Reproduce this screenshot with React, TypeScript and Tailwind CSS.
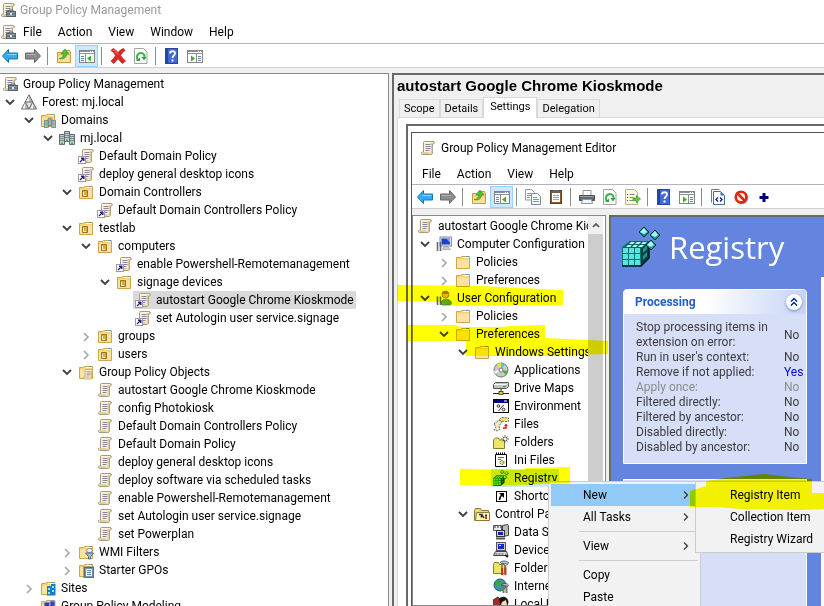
import type { ReactNode } from "react";

/* ---------- icons, all on a 16x16 grid ---------- */

const Svg = ({ children }: { children: ReactNode }) => (
  <svg className="w-4 h-4 shrink-0" viewBox="0 0 16 16" fill="none" aria-hidden="true">
    {children}
  </svg>
);

const ScrollShape = () => (
  <>
    <path d="M4.500 1.500h8.500c2 0 2 2.500 0 2.500h-.5v8c0 1.800-.5 2.500-1.500 2.500H2.500C1 14.500 1 12 2.500 12h1V2.500c0-.6.4-1 1-1z" fill="#fbf3d2" stroke="#a39b82" />
    <path d="M11.500 3v9c0 1.200-.5 1.700-1 1.700" stroke="#dccb93" strokeWidth="1.500" />
    <path d="M13.500 2v2" stroke="#c9b77c" />
    <path d="M5.500 4.500h5M5.500 6.500h5M5.500 8.500h5M5.500 10.500h4" stroke="#8484a0" />
    <path d="M2.500 13h7" stroke="#d6c48a" strokeWidth="1.500" />
  </>
);

const ScrollIcon = () => (
  <Svg>
    <ScrollShape />
  </Svg>
);

const ScrollLinkIcon = () => (
  <Svg>
    <g transform="translate(1 0)">
      <ScrollShape />
    </g>
    <rect x="0.500" y="8.500" width="7" height="7" fill="#fff" stroke="#9a9aac" />
    <path d="M3 10h3v3z" fill="#23237e" stroke="#23237e" />
    <path d="M4.500 11.500L2 14" stroke="#23237e" strokeWidth="1.200" />
  </Svg>
);

const ConsoleIcon = () => (
  <Svg>
    <ScrollShape />
    <path d="M9 9.500V8h4v1.500" stroke="#5c6670" />
    <rect x="6.500" y="9.500" width="9" height="5" fill="#8c9dab" stroke="#56636f" />
    <path d="M7 12h8" stroke="#47525c" />
    <rect x="10" y="11" width="2" height="2" fill="#dfe6ea" />
  </Svg>
);

const ForestIcon = () => (
  <Svg>
    <path d="M8 .8L15.500 15H.5z" fill="#b9b9b9" stroke="#6a6a6a" />
    <path d="M8 2v6H4.800zM4 9v5.500H1.500zM12 9v5.500H9z" fill="#f4f4f4" />
    <path d="M4.300 8h7.400L8 15z" fill="#e4e4e4" stroke="#6a6a6a" />
  </Svg>
);

const FolderBase = () => (
  <>
    <path d="M1.500 3.500h4l1-1h8v12h-13z" fill="#f3d27c" stroke="#cfa54a" />
    <path d="M2 5.500h12V14H2z" fill="#fae3a0" />
    <path d="M8 3.500h6" stroke="#fff" />
    <path d="M11 2.500h3" stroke="#4f9be6" />
  </>
);

const FolderIcon = () => (
  <Svg>
    <FolderBase />
  </Svg>
);

const OuIcon = () => (
  <Svg>
    <FolderBase />
    <path d="M4.500 6.500h5v6h-5z" fill="#d5ac45" stroke="#987423" />
    <path d="M5.500 8v3.500h2.500" stroke="#fff3c4" />
  </Svg>
);

const ServerShape = () => (
  <>
    {[[5, 1], [0, 4], [10, 4]].map(([x, y]) => (
      <g key={x} transform={`translate(${x} ${y})`}>
        <path d="M.5.500h5v10h-5z" fill="#c3ccd3" stroke="#626c74" />
        <path d="M1 2.500h4M1 4.500h4M1 6.500h4" stroke="#7c8790" />
        <path d="M2 9.500h2" stroke="#35c413" strokeWidth="2" />
      </g>
    ))}
  </>
);

const DomainIcon = () => (
  <Svg>
    <ServerShape />
  </Svg>
);

const DomainsIcon = () => (
  <Svg>
    <FolderBase />
    <g transform="translate(4 5) scale(.75)">
      <ServerShape />
    </g>
  </Svg>
);

const GpoFolderIcon = () => (
  <Svg>
    <FolderBase />
    <g transform="translate(4.500 4.500) scale(.72)">
      <ScrollShape />
    </g>
  </Svg>
);

const WmiIcon = () => (
  <Svg>
    <FolderBase />
    <ellipse cx="11.500" cy="6.500" rx="3" ry="2" fill="#f4f4f4" stroke="#888" />
    <path d="M7.500 9h8l-3 3.500V15h-2v-2.500z" fill="#a7c0d4" stroke="#4d6c85" />
  </Svg>
);

const StarterIcon = () => (
  <Svg>
    <FolderBase />
    <rect x="6" y="5" width="9.500" height="10.500" fill="#7a5540" stroke="#5c7080" />
    <rect x="7.500" y="6.500" width="7" height="8" fill="#edf5fb" stroke="#7895ad" />
    <path d="M9 8.500h4M9 10.500h4M9 12.500h4" stroke="#5b86a8" />
  </Svg>
);

const SitesIcon = () => (
  <Svg>
    <FolderBase />
    <path d="M7 6h4V4h4.500v11.500H7z" fill="#1380c4" />
    <path d="M8 8h2v2H8zM12 6h2v2h-2zM12 10h2v2h-2zM8 12h2v2H8z" fill="#9fe0ff" />
  </Svg>
);

const ModelingIcon = () => (
  <Svg>
    <FolderBase />
    <rect x="4" y="4" width="6" height="5" fill="#2a3fb0" stroke="#ccc" />
    <rect x="10" y="3" width="5" height="6" fill="#3048c0" stroke="#aaa" />
  </Svg>
);

const ArrowIcon = ({ forward = false }: { forward?: boolean }) => (
  <Svg>
    <path
      d={forward ? "M15.500 8L9.500 1.500v3.500H.5v6h9v3.500z" : "M.5 8L6.500 1.500v3.500h9v6h-9v3.500z"}
      fill={forward ? "#8c8c8c" : "#35aaf0"}
      stroke={forward ? "#696969" : "#1475bb"}
    />
    <path d={forward ? "M1.500 6.500h9" : "M5.500 6.500h9"} stroke={forward ? "#b4b4b4" : "#8fd6fb"} />
  </Svg>
);

const FolderUpIcon = () => (
  <Svg>
    <path d="M1.500 4.500h5l1-2h6l1 2v10h-13z" fill="#f3cf76" stroke="#c69c40" />
    <path d="M2 8h12v6H2z" fill="#fadf95" />
    <path d="M3 10.500c3 0 4.500-2 4.500-4.500H5L9 1l4 5h-2.500c0 3.500-3 6-7.500 4.500z" fill="#4dc22f" stroke="#2b8a1d" strokeWidth=".6" />
  </Svg>
);

const PaneIcon = ({ play = false }: { play?: boolean }) => (
  <Svg>
    <rect x=".5" y="2.500" width="15" height="12" fill="#fff" stroke="#858585" />
    <path d="M1 3.500h14M1 5.500h14" stroke="#8d9196" />
    <path d="M11 3.500h1M13 3.500h1" stroke="#fff" />
    <path d={play ? "M9.500 6v9" : "M6.500 6v9"} stroke="#8b8b8b" />
    <path d={play ? "M11 8.500h3M11 10.500h3M11 12.500h3" : "M2 8.500h3M2 10.500h3M2 12.500h3"} stroke="#5a86b8" />
    <path d={play ? "M4 7.500v6l4-3z" : "M12 7.500v6l-4-3z"} fill="#35b224" />
  </Svg>
);

const DeleteIcon = () => (
  <Svg>
    <path d="M1 2.500L3 .5c2 .5 3.500 2.500 5 4 1.500-1.700 3.300-3.300 5.500-4L15 2.500c-1.800 1.300-3.500 3-4.500 5 1.300 2 3 3.700 5 5.500l-3 2.500c-1.700-1.200-3-3-4.500-5-1.300 2-3 4-4.500 5L1 13c1.800-1.500 3.500-3.500 4.500-5.500C4.500 5.500 2.800 3.700 1 2.500z" fill="#dd2626" stroke="#b11b1b" strokeWidth=".7" />
    <path d="M3 2c2 1 3.500 3 5 4.500" stroke="#f38a86" />
  </Svg>
);

const PageOutline = () => (
  <path d="M1.500.500h9l3.500 3.500v11.500H1.500z" fill="#fdfdfd" stroke="#a3a3a3" />
);

const RefreshIcon = () => (
  <Svg>
    <PageOutline />
    <path d="M5.500 12.500C3 10.500 3.500 5.500 7.500 5c3-.2 4.500 2 4 5" stroke="#39b54a" strokeWidth="2" />
    <path d="M8.500 9H13.500l-2.500 3.500zM7 9.500v3.500H3z" fill="#2ba63b" />
  </Svg>
);

const HelpIcon = () => (
  <Svg>
    <rect x="1.500" y=".5" width="12" height="15" fill="#4169cf" stroke="#2748a0" />
    <path d="M3 1v14" stroke="#2346a5" strokeWidth="2" />
    <path d="M6 5.500C6 2.500 11 2.500 11 5.500c0 2-2.500 2-2.500 4.500" stroke="#fff" strokeWidth="1.800" />
    <rect x="7.500" y="11.500" width="2" height="2" fill="#fff" />
  </Svg>
);

const CopyIcon = () => (
  <Svg>
    <path d="M.5.500h6l3 3v7.500h-9z" fill="#fff" stroke="#8f9aa8" />
    <path d="M2 4.500h4M2 6.500h4M2 8.500h3" stroke="#5c9bd6" />
    <path d="M6.500 4.500h6l3 3v8h-9z" fill="#fff" stroke="#7d8794" />
    <path d="M8 8.500h4M8 10.500h6M8 12.500h6" stroke="#5c9bd6" />
  </Svg>
);

const PasteIcon = () => (
  <Svg>
    <rect x="2.500" y="1.500" width="11" height="13" fill="#8c5a30" stroke="#663f1d" />
    <rect x="4" y="4" width="8" height="9" fill="#fafafa" />
    <path d="M5 6.500h6M5 8.500h6M5 10.500h6" stroke="#9aa7b2" />
    <path d="M5 1h6v3H5z" fill="#626262" />
  </Svg>
);

const PrinterIcon = () => (
  <Svg>
    <path d="M4 1.500h8v5H4z" fill="#fff" stroke="#969696" />
    <path d="M.5 6.500h15v5H.5z" fill="#65696f" stroke="#484b50" />
    <path d="M1 7.500h14" stroke="#9fa3a8" />
    <path d="M3.500 10.500h9l1 4h-11z" fill="#eef5fb" stroke="#8c98a3" />
  </Svg>
);

const ExportIcon = () => (
  <Svg>
    <path d="M.5.500h9l3 3v12H.5z" fill="#fcf8d8" stroke="#b5b09a" />
    <path d="M2 5.500h1M2 8.500h1M2 11.500h1" stroke="#444" />
    <path d="M4.500 5.500h5M4.500 8.500h4M4.500 11.500h4" stroke="#8585a0" />
    <path d="M8 9h3.500V6.500L15.500 10l-4 3.500V11.500H8z" fill="#60c83d" stroke="#3a9c25" strokeWidth=".7" />
  </Svg>
);

const XmlIcon = () => (
  <Svg>
    <path d="M1.500 13.500V.5h8" stroke="#4b89a3" />
    <path d="M3.500 2.500h7l4 4v9h-11z" fill="#fff" stroke="#3e6f96" />
    <path d="M10.500 2.500v4h4z" fill="#2f80c2" />
    <path d="M8 8.500L6 10.500l2 2M10 8.500l2 2-2 2" stroke="#171783" strokeWidth="1.300" />
  </Svg>
);

const StopIcon = () => (
  <Svg>
    <circle cx="8.700" cy="8.700" r="6.500" fill="#8a8a8a" />
    <circle cx="8" cy="8" r="5.300" fill="#fff" stroke="#e1280f" strokeWidth="2.600" />
    <path d="M4.500 4.500l7 7" stroke="#e1280f" strokeWidth="2.600" />
  </Svg>
);

const PlusIcon = () => (
  <Svg>
    <path d="M8 4v9M3.500 8.500h9" stroke="#000080" strokeWidth="3" />
  </Svg>
);

const ComputerIcon = () => (
  <Svg>
    <rect x="4" y="1" width="11.500" height="9" fill="#dfe3e7" stroke="#8b939b" />
    <rect x="5.500" y="2.500" width="8.500" height="6" fill="#1d3fd0" />
    <path d="M10 2.500h4v4z" fill="#86a5fa" />
    <path d="M8 10.500h4l2.500 3h-8z" fill="#c2c7cc" stroke="#8b939b" strokeWidth=".6" />
    <path d="M1.500 6v9M4.500 6v9" stroke="#5d6973" strokeWidth="1.600" />
  </Svg>
);

const UserIcon = () => (
  <Svg>
    <path d="M5 13c0-5 10-5 10.500 0l-1 2H6z" fill="#62a838" stroke="#39751d" strokeWidth=".7" />
    <circle cx="9.500" cy="4.500" r="3.500" fill="#e8bd71" stroke="#8b662c" strokeWidth=".8" />
    <path d="M6 4c0-4 6-4 7 0z" fill="#a87833" />
    <path d="M1.500 6.500v8.500M4.500 6.500v8.500" stroke="#5d6973" strokeWidth="1.600" />
  </Svg>
);

const DiscIcon = () => (
  <Svg>
    <circle cx="8" cy="8" r="7" fill="#c9c9c9" stroke="#777" />
    <path d="M8 8L4 2l4-1z" fill="#ece83a" />
    <path d="M8 8V1l4 1z" fill="#3fcfe4" />
    <path d="M8 8l7 1-2 4z" fill="#45ba3a" />
    <path d="M8 8l-6 4-1-3z" fill="#f5f5f5" />
    <circle cx="8" cy="8" r="2" fill="#fff" stroke="#777" />
  </Svg>
);

const DriveIcon = () => (
  <Svg>
    <path d="M2.500 2.500h13v4l-2 2H.5v-4z" fill="#c4c4c4" stroke="#555" />
    <path d="M1 4.500h12.500l1.500-1.500" stroke="#fff" />
    <path d="M10 6.500h3" stroke="#2ba32b" />
    <path d="M8 8.500v4M0 13.500h16" stroke="#222" />
    <rect x="6" y="11.500" width="4" height="3" fill="#dccf3a" stroke="#222" strokeWidth=".7" />
  </Svg>
);

const EnvironmentIcon = () => (
  <Svg>
    <rect x=".5" y="1.500" width="15" height="13" fill="#fff" stroke="#000" />
    <path d="M1 3.500h14" stroke="#00007d" strokeWidth="3" />
    <path d="M11 3h3" stroke="#fff" />
    <circle cx="5.500" cy="8" r="1.300" stroke="#000" strokeWidth=".8" />
    <circle cx="10.500" cy="11.500" r="1.300" stroke="#000" strokeWidth=".8" />
    <path d="M10.500 7l-5 6" stroke="#000" strokeWidth=".8" />
  </Svg>
);

const FilesIcon = () => (
  <Svg>
    <path d="M6.500 3.500l2-2 7 .5v3.500h-5l-4-1z" fill="#f0e374" stroke="#444" strokeWidth=".8" strokeDasharray="2 1" />
    <path d="M1 8l5-4 3 2-3 4 1 3-3 2-3-1 2-3z" fill="#ede9c0" stroke="#444" strokeWidth=".8" strokeDasharray="2 1" />
    <path d="M10 12h3V9.500" stroke="#d11" strokeWidth="1.400" />
    <path d="M11 10L13 7.500l2 2.500z" fill="#d11" />
  </Svg>
);

const NewFolderIcon = () => (
  <Svg>
    <path d="M.5 6l2-2h3l1 2h5v8.500H.5z" fill="#ede46b" stroke="#85802a" />
    <path d="M12 1v8M8 5h8M9.500 2.500l5 5M14.500 2.500l-5 5" stroke="#444" strokeWidth=".8" />
    <rect x="11" y="4" width="2" height="2" fill="#fff" />
  </Svg>
);

const IniIcon = () => (
  <Svg>
    <path d="M2.500 2.500h11v12h-11z" fill="#fff" stroke="#000" />
    <path d="M3 1.500h10" stroke="#000" strokeDasharray="1 1" strokeWidth="2" />
    <path d="M5 5.500h6M5 7.500h3" stroke="#666" />
    <circle cx="9" cy="10.500" r="2" fill="#ece74b" stroke="#333" strokeDasharray="1 1" />
  </Svg>
);

const CubeShape = () => (
  <>
    <path d="M1 20l8-6h17l-5 7-2 18H1z" fill="#08706d" />
    <path d="M20 21l8-7v17l-8 8z" fill="#05413f" />
    <path d="M9 14h19l-7 7H1z" fill="#0b6a67" />
    {[[2, 21], [8, 21], [14, 21], [2, 27], [8, 27], [14, 27], [2, 33], [8, 33], [14, 33]].map(([x, y]) => (
      <rect key={`${x}-${y}`} x={x} y={y} width="5" height="5" fill="#57e5df" />
    ))}
    <path d="M10 15h4l-2 2H8zM16 15h4l-2 2h-4zM22 15h4l-2 2h-4zM7 18h4l-2 2H5zM13 18h4l-2 2h-4zM19 18h4l-2 2h-4z" fill="#b8fffb" />
    <path d="M22 22l4-4v4l-4 4zM22 29l4-4v4l-4 4z" fill="#139e98" />
    <path d="M1 39h19l8-8V17" stroke="#021b1c" strokeWidth="1.500" />
    {[[23, 5], [34, 8], [30, 18]].map(([x, y]) => (
      <g key={x} transform={`translate(${x} ${y})`}>
        <path d="M0-5l5 5-5 5-5-5z" fill="#159b96" stroke="#042d2e" />
        <path d="M0-4L3 0 0 2-4 0z" fill="#a1fff7" />
      </g>
    ))}
  </>
);

const RegistryIcon = () => (
  <svg className="w-4 h-4 shrink-0" viewBox="0 0 40 40" fill="none" aria-hidden="true">
    <CubeShape />
  </svg>
);

const ShortcutIcon = () => (
  <Svg>
    <rect x="3.500" y="3.500" width="10" height="10" fill="#fff" stroke="#000" />
    <path d="M6 5h5v5z" fill="#000" />
    <path d="M9.500 6.500C7.500 8 6.500 9.500 6.500 12" stroke="#000" strokeWidth="1.500" />
  </Svg>
);

const ControlPanelIcon = () => (
  <Svg>
    <path d="M.5 4.500l1-2h5l1 2h7v10H.5z" fill="#e8d976" stroke="#8d7933" />
    <path d="M2.500 6.500h13v8h-14z" fill="#fff8bd" stroke="#8d7933" />
    <path d="M5 8.500h3l-1 3M8 9l2 3" stroke="#333" strokeWidth="1.400" />
    <path d="M12 8.500v2" stroke="#333" strokeWidth="2" />
    <path d="M12 10.500v2.500" stroke="#d32222" strokeWidth="2" />
  </Svg>
);

const DataSourceIcon = () => (
  <Svg>
    <path d="M.5 1.500h8v5h-8z" fill="#e9e9f2" stroke="#555" />
    <path d="M1 3h7" stroke="#2230a8" strokeDasharray="2 1" />
    <path d="M9.500 1.500l5-1 1 1v10l-6 1z" fill="#b9b9b9" stroke="#444" />
    <rect x="3.500" y="6.500" width="8" height="6" fill="#d5d5d5" stroke="#333" />
    <rect x="5" y="8" width="5" height="3" fill="#1029b0" />
    <path d="M3 14.500h9" stroke="#555" strokeWidth="2" />
  </Svg>
);

const DeviceIcon = () => (
  <Svg>
    <rect x="3.500" y=".5" width="9" height="8" fill="#cfcfcf" stroke="#555" />
    <rect x="5" y="2" width="6" height="5" fill="#1029c8" />
    <path d="M6 3h2v1H6z" fill="#fff" />
    <path d="M2.500 9.500h11l1.500 4H.5z" fill="#d8d8d8" stroke="#444" />
    <path d="M2.500 12h9" stroke="#555" strokeDasharray="2 1" />
    <path d="M12 13l3 2" stroke="#222" strokeWidth="2" />
  </Svg>
);

const FolderOptionsIcon = () => (
  <Svg>
    <path d="M.5 4.500l1-2h4l1 2h5v9H.5z" fill="#f0e36b" stroke="#8a7d28" />
    <path d="M7 2.500c2-2 6-2 8.500 0l-1 2-3-1H8z" fill="#b8c7d0" stroke="#3c4c58" strokeWidth=".8" />
    <path d="M9 5v3M12.500 5v3" stroke="#777" strokeWidth="1.600" />
    <path d="M9 8v7M12.500 8v7" stroke="#d0301c" strokeWidth="2" />
  </Svg>
);

const InternetIcon = () => (
  <Svg>
    <circle cx="7" cy="7" r="6" fill="#3f93b8" stroke="#235266" />
    <path d="M3 3c3-2 5-1 6 1L7 7 3 8 2 6zM7 9l4 1-2 3-3-1z" fill="#35a84a" />
    <path d="M8 7c2-2 6-2 7.500 0l-1 1.500-3-1z" fill="#c5c5c5" stroke="#333" strokeWidth=".7" />
    <path d="M10.500 8v7M13.500 8v7" stroke="#777" strokeWidth="2" />
  </Svg>
);

const LocalUsersIcon = () => (
  <Svg>
    <path d="M0 4l5-3 3 3v5l-4 4-3-2z" fill="#a62d24" stroke="#222" strokeWidth=".8" />
    <path d="M6 3c3-4 9-2 9.500 3L14 12H8z" fill="#161616" />
    <path d="M9 6l4-2 1 5-3 3-3-3z" fill="#f8dcb9" />
  </Svg>
);

const Chevron = ({ open = false }: { open?: boolean }) => (
  <svg className="w-3 h-3" viewBox="0 0 12 12" fill="none" aria-hidden="true">
    {open ? (
      <path d="M2 4l4 4 4-4" stroke="#404040" strokeWidth="1.800" />
    ) : (
      <path d="M4 3l4 4-4 4" stroke="#a6a6a6" strokeWidth="1.600" />
    )}
  </svg>
);

/* ---------- tree ---------- */

type Node = {
  depth: number;
  label: string;
  icon: ReactNode;
  state?: "open" | "closed";
  selected?: "gray" | "blue";
};

const policyTree: Node[] = [
  { depth: 0, label: "Group Policy Management", icon: <ConsoleIcon /> },
  { depth: 1, label: "Forest: mj.local", icon: <ForestIcon />, state: "open" },
  { depth: 2, label: "Domains", icon: <DomainsIcon />, state: "open" },
  { depth: 3, label: "mj.local", icon: <DomainIcon />, state: "open" },
  { depth: 4, label: "Default Domain Policy", icon: <ScrollLinkIcon /> },
  { depth: 4, label: "deploy general desktop icons", icon: <ScrollLinkIcon /> },
  { depth: 4, label: "Domain Controllers", icon: <OuIcon />, state: "open" },
  { depth: 5, label: "Default Domain Controllers Policy", icon: <ScrollLinkIcon /> },
  { depth: 4, label: "testlab", icon: <OuIcon />, state: "open" },
  { depth: 5, label: "computers", icon: <OuIcon />, state: "open" },
  { depth: 6, label: "enable Powershell-Remotemanagement", icon: <ScrollLinkIcon /> },
  { depth: 6, label: "signage devices", icon: <OuIcon />, state: "open" },
  { depth: 7, label: "autostart Google Chrome Kioskmode", icon: <ScrollLinkIcon />, selected: "gray" },
  { depth: 7, label: "set Autologin user service.signage", icon: <ScrollLinkIcon /> },
  { depth: 5, label: "groups", icon: <OuIcon />, state: "closed" },
  { depth: 5, label: "users", icon: <OuIcon />, state: "closed" },
  { depth: 4, label: "Group Policy Objects", icon: <GpoFolderIcon />, state: "open" },
  { depth: 5, label: "autostart Google Chrome Kioskmode", icon: <ScrollIcon /> },
  { depth: 5, label: "config Photokiosk", icon: <ScrollIcon /> },
  { depth: 5, label: "Default Domain Controllers Policy", icon: <ScrollIcon /> },
  { depth: 5, label: "Default Domain Policy", icon: <ScrollIcon /> },
  { depth: 5, label: "deploy general desktop icons", icon: <ScrollIcon /> },
  { depth: 5, label: "deploy software via scheduled tasks", icon: <ScrollIcon /> },
  { depth: 5, label: "enable Powershell-Remotemanagement", icon: <ScrollIcon /> },
  { depth: 5, label: "set Autologin user service.signage", icon: <ScrollIcon /> },
  { depth: 5, label: "set Powerplan", icon: <ScrollIcon /> },
  { depth: 4, label: "WMI Filters", icon: <WmiIcon />, state: "closed" },
  { depth: 4, label: "Starter GPOs", icon: <StarterIcon />, state: "closed" },
  { depth: 2, label: "Sites", icon: <SitesIcon />, state: "closed" },
  { depth: 2, label: "Group Policy Modeling", icon: <ModelingIcon /> },
];

const editorTree: Node[] = [
  { depth: 0, label: "autostart Google Chrome Kioskmode", icon: <ScrollIcon /> },
  { depth: 1, label: "Computer Configuration", icon: <ComputerIcon />, state: "open" },
  { depth: 2, label: "Policies", icon: <FolderIcon />, state: "closed" },
  { depth: 2, label: "Preferences", icon: <FolderIcon />, state: "closed" },
  { depth: 1, label: "User Configuration", icon: <UserIcon />, state: "open" },
  { depth: 2, label: "Policies", icon: <FolderIcon />, state: "closed" },
  { depth: 2, label: "Preferences", icon: <FolderIcon />, state: "open" },
  { depth: 3, label: "Windows Settings", icon: <FolderIcon />, state: "open" },
  { depth: 4, label: "Applications", icon: <DiscIcon /> },
  { depth: 4, label: "Drive Maps", icon: <DriveIcon /> },
  { depth: 4, label: "Environment", icon: <EnvironmentIcon /> },
  { depth: 4, label: "Files", icon: <FilesIcon /> },
  { depth: 4, label: "Folders", icon: <NewFolderIcon /> },
  { depth: 4, label: "Ini Files", icon: <IniIcon /> },
  { depth: 4, label: "Registry", icon: <RegistryIcon />, selected: "blue" },
  { depth: 4, label: "Shortcuts", icon: <ShortcutIcon /> },
  { depth: 3, label: "Control Panel Settings", icon: <ControlPanelIcon />, state: "open" },
  { depth: 4, label: "Data Sources", icon: <DataSourceIcon /> },
  { depth: 4, label: "Devices", icon: <DeviceIcon /> },
  { depth: 4, label: "Folder Options", icon: <FolderOptionsIcon /> },
  { depth: 4, label: "Internet Settings", icon: <InternetIcon /> },
  { depth: 4, label: "Local Users and Groups", icon: <LocalUsersIcon /> },
];

const selectedClass = { gray: "bg-[#d9d9d9]", blue: "bg-[#cce8ff]" };

const Tree = ({ nodes, label }: { nodes: Node[]; label: string }) => (
  <ul role="tree" aria-label={label} className="min-w-0 flex-1 overflow-hidden pt-px">
    {nodes.map((node, i) => (
      <li
        key={i}
        role="treeitem"
        aria-level={node.depth + 1}
        aria-selected={Boolean(node.selected)}
        className="flex h-[18px] items-center whitespace-nowrap"
        style={{ paddingLeft: Math.max(node.depth - 1, 0) * 19 }}
      >
        {node.depth > 0 && (
          <span className="flex w-[19px] shrink-0 justify-center">
            {node.state && (
              <button aria-label={`Toggle ${node.label}`}>
                <Chevron open={node.state === "open"} />
              </button>
            )}
          </span>
        )}
        <span className={`flex h-[18px] items-center gap-[5px] pl-0.5 pr-0.5 ${node.selected ? selectedClass[node.selected] : ""}`}>
          {node.icon}
          <span>{node.label}</span>
        </span>
      </li>
    ))}
  </ul>
);

/* ---------- bars ---------- */

type Tool = { name: string; icon: ReactNode; active?: boolean } | null;

const Toolbar = ({ tools }: { tools: Tool[] }) => (
  <div className="flex h-[22px] items-center">
    {tools.map((tool, i) =>
      tool ? (
        <button
          key={i}
          aria-label={tool.name}
          className={`flex h-[22px] w-[23px] items-center justify-center ${tool.active ? "border border-[#99d1ff] bg-[#cce8ff]" : ""}`}
        >
          {tool.icon}
        </button>
      ) : (
        <span key={i} className="ml-[3px] mr-1 h-[18px] w-px bg-[#8c8c8c]" />
      ),
    )}
  </div>
);

const MenuBar = ({ items }: { items: string[] }) => (
  <nav className="flex items-center gap-4">
    {items.map((item) => (
      <button key={item}>{item}</button>
    ))}
  </nav>
);

const mainTools: Tool[] = [
  { name: "Back", icon: <ArrowIcon /> },
  { name: "Forward", icon: <ArrowIcon forward /> },
  null,
  { name: "Up one level", icon: <FolderUpIcon /> },
  { name: "Show console tree", icon: <PaneIcon />, active: true },
  null,
  { name: "Delete", icon: <DeleteIcon /> },
  { name: "Refresh", icon: <RefreshIcon /> },
  null,
  { name: "Help", icon: <HelpIcon /> },
  { name: "Show action pane", icon: <PaneIcon play /> },
];

const editorTools: Tool[] = [
  { name: "Back", icon: <ArrowIcon /> },
  { name: "Forward", icon: <ArrowIcon forward /> },
  null,
  { name: "Up one level", icon: <FolderUpIcon /> },
  { name: "Show console tree", icon: <PaneIcon />, active: true },
  null,
  { name: "Copy", icon: <CopyIcon /> },
  { name: "Paste", icon: <PasteIcon /> },
  null,
  { name: "Print", icon: <PrinterIcon /> },
  { name: "Refresh", icon: <RefreshIcon /> },
  { name: "Export list", icon: <ExportIcon /> },
  null,
  { name: "Help", icon: <HelpIcon /> },
  { name: "Show action pane", icon: <PaneIcon play /> },
  null,
  { name: "Display XML", icon: <XmlIcon /> },
  { name: "Disable", icon: <StopIcon /> },
  { name: "Add", icon: <PlusIcon /> },
];

/* ---------- details pane ---------- */

const processing = [
  { label: "Stop processing items in extension on error:", value: "No" },
  { label: "Run in user's context:", value: "No" },
  { label: "Remove if not applied:", value: "Yes", color: "text-[#0000f0]" },
  { label: "Apply once:", value: "No", muted: true },
  { label: "Filtered directly:", value: "No" },
  { label: "Filtered by ancestor:", value: "No" },
  { label: "Disabled directly:", value: "No" },
  { label: "Disabled by ancestor:", value: "No" },
];

const DetailsPane = () => (
  <section className="flex min-w-0 flex-1 overflow-hidden border-l-2 border-t-2 border-[#696969] bg-[#6384df]">
    <div className="w-[210px] shrink-0">
      <div className="flex h-[72px] items-start gap-2 pl-[10px] pt-[10px]">
        <svg className="h-10 w-10 shrink-0" viewBox="0 0 40 40" fill="none" aria-hidden="true">
          <CubeShape />
        </svg>
        <h2 className="font-['Open_Sans','Noto_Sans',sans-serif] text-[31px] leading-10 text-white">Registry</h2>
      </div>
      <div className="ml-3 mr-[14px] overflow-hidden rounded-t-sm border border-white bg-[#d6dff7]">
        <div className="flex h-6 items-center justify-between bg-linear-to-r from-white from-45% to-[#c6d3f7] pl-[11px] pr-1">
          <h3 className="font-bold text-[#215dc6]">Processing</h3>
          <button aria-label="Collapse" className="flex h-4 w-4 items-center justify-center rounded-full bg-white shadow-sm shadow-[#7f8fb8]">
            <svg className="w-3 h-3" viewBox="0 0 12 12" fill="none" aria-hidden="true">
              <path d="M3 5.500l3-3 3 3M3 9.500l3-3 3 3" stroke="#00309c" strokeWidth="1.500" />
            </svg>
          </button>
        </div>
        <table className="mb-2 mt-[6px] w-full text-[#3c3c3c]">
          <tbody>
            {processing.map((row) => (
              <tr key={row.label} className={row.muted ? "text-[#8c8c8c]" : ""}>
                <th scope="row" className="pl-3 pr-3 text-left font-normal leading-[15px]">{row.label}</th>
                <td className={`w-[22px] leading-[15px] ${row.color ?? ""}`}>{row.value}</td>
              </tr>
            ))}
          </tbody>
        </table>
      </div>
      <div className="ml-3 mr-[14px] mt-[15px] h-40 border border-white bg-[#d6dff7]" />
    </div>
    <div className="mt-[60px] flex-1 bg-white" />
  </section>
);

/* ---------- context menus ---------- */

const ContextItem = ({ label, sub = false, active = false }: { label: string; sub?: boolean; active?: boolean }) => (
  <button role="menuitem" className={`flex h-[22px] w-full items-center pl-8 pr-2 text-left ${active ? "bg-[#91c9f7]" : ""}`}>
    <span className="flex-1">{label}</span>
    {sub && (
      <svg className="w-2 h-2" viewBox="0 0 8 8" fill="none" aria-hidden="true">
        <path d="M2 0.500L5.500 4 2 7.500" stroke="#333" strokeWidth="1.200" />
      </svg>
    )}
  </button>
);

const Separator = () => <div className="my-[3px] ml-7 h-px bg-[#cfcfcf]" />;

const ContextMenus = () => (
  <>
    <div role="menu" className="absolute left-[548px] top-[481px] w-[153px] border border-[#ccc] bg-[#f2f2f2] p-[2px]">
      <ContextItem label="New" sub active />
      <ContextItem label="All Tasks" sub />
      <Separator />
      <ContextItem label="View" sub />
      <Separator />
      <ContextItem label="Copy" />
      <ContextItem label="Paste" />
    </div>
    <div role="menu" className="absolute left-[695px] top-[481px] w-[140px] border border-[#ccc] bg-[#f2f2f2] p-[2px]">
      <ContextItem label="Registry Item" />
      <ContextItem label="Collection Item" />
      <ContextItem label="Registry Wizard" />
    </div>
  </>
);

/* Marker strokes drawn over the windows */
const Highlights = () => (
  <svg className="pointer-events-none absolute left-0 top-0 h-[606px] w-[824px] mix-blend-multiply" viewBox="0 0 824 606" fill="#ff0" aria-hidden="true">
    <path d="M397 285L480 286 520 288 563 290V305L457 306 440 302 397 301z" />
    <path d="M408 325L455 325 460 327H500L510 326 545 325V338L608 341V354L540 356H466V341H408z" />
    <path d="M460 469L525 470V468L570 467V483L494 486 460 485z" />
    <path d="M690 491L706 486V481L725 478 765 474 790 477 812 479V493H824V509L800 510 740 509 718 507H690z" />
  </svg>
);

const tabs = ["Scope", "Details", "Settings", "Delegation"];

const EditorWindow = () => (
  <div className="flex min-h-0 flex-1 flex-col overflow-hidden border-l border-t border-[#555] bg-white">
    <div className="flex h-[30px] items-center gap-[5px] pl-2">
      <ScrollIcon />
      <span>Group Policy Management Editor</span>
    </div>
    <div className="flex h-[22px] items-center border-b border-[#b4b4c0] pl-[10px]">
      <MenuBar items={["File", "Action", "View", "Help"]} />
    </div>
    <div className="flex h-6 items-center border-b border-[#d0d0d0] pl-px">
      <Toolbar tools={editorTools} />
    </div>
    <div className="flex min-h-0 flex-1 gap-[3px] bg-[#f0f0f0] pt-[6px]">
      <div className="flex w-[194px] shrink-0 overflow-hidden border border-[#828790] bg-white pl-[2px]">
        <Tree nodes={editorTree} label="Policy editor" />
        <div className="mr-[2px] w-[15px] shrink-0 bg-[#cdcdcd]">
          <button aria-label="Scroll up" className="flex h-[18px] w-full items-center justify-center bg-[#f0f0f0]">
            <svg className="w-2 h-2" viewBox="0 0 8 8" fill="none" aria-hidden="true">
              <path d="M1 6l3-3 3 3" stroke="#505050" strokeWidth="1.600" />
            </svg>
          </button>
        </div>
      </div>
      <DetailsPane />
    </div>
  </div>
);

const App = () => {
  return (
    <div className="relative flex h-screen flex-col overflow-hidden bg-white font-['Roboto','Noto_Sans',sans-serif] text-[12px] leading-4 text-black">
      <header>
        <div className="flex h-5 items-center gap-1 text-[#999]">
          <ConsoleIcon />
          <h1>Group Policy Management</h1>
        </div>
        <div className="flex h-6 items-center gap-[7px] border-b border-[#b4b4b4]">
          <ConsoleIcon />
          <MenuBar items={["File", "Action", "View", "Window", "Help"]} />
        </div>
        <div className="-ml-0.5 flex h-6 items-center border-b border-[#d0d0d0]">
          <Toolbar tools={mainTools} />
        </div>
      </header>

      <main className="flex min-h-0 flex-1 gap-[3px] bg-[#f0f0f0] pt-[5px]">
        <div className="flex w-[389px] shrink-0 overflow-hidden border-r border-t border-[#828790] bg-white">
          <Tree nodes={policyTree} label="Group policy" />
        </div>
        <div className="flex min-w-0 flex-1 flex-col border-l-2 border-t-2 border-[#696969] pl-[3px]">
          <h2 className="h-[22px] pt-[3px] font-['Liberation_Sans',Arial,sans-serif] text-[15px] font-bold leading-4">
            autostart Google Chrome Kioskmode
          </h2>
          <div role="tablist" className="flex h-5 items-end pl-[2px] text-[11px]">
            {tabs.map((tab) => (
              <button
                key={tab}
                role="tab"
                aria-selected={tab === "Settings"}
                className={
                  tab === "Settings"
                    ? "relative -mb-px h-[21px] border border-b-0 border-[#d9d9d9] bg-white px-[6px] pb-[2px]"
                    : "h-[18px] border border-b-0 border-[#d9d9d9] px-1"
                }
              >
                {tab}
              </button>
            ))}
          </div>
          <div className="flex min-h-0 flex-1 flex-col border-l border-t border-[#d9d9d9] bg-white pl-2 pt-[6px]">
            <div className="flex min-h-0 flex-1 flex-col border-l-2 border-t-2 border-[#696969] pl-[3px] pt-[6px]">
              <EditorWindow />
            </div>
          </div>
        </div>
      </main>

      <ContextMenus />
      <Highlights />
    </div>
  );
};

export default App;
